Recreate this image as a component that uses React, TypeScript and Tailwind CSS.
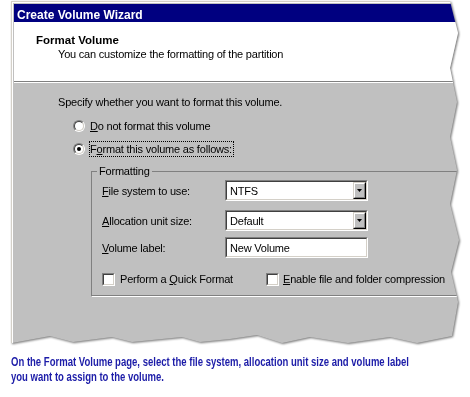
import type { ReactNode } from 'react'

function Sunken({ className, children }: { className: string; children?: ReactNode }) {
  return (
    <div className={`border border-t-[#808080] border-l-[#808080] border-b-white border-r-white ${className}`}>
      <div className="flex h-full border border-t-[#404040] border-l-[#404040] border-b-[#d4d0c8] border-r-[#d4d0c8] bg-white">
        {children}
      </div>
    </div>
  )
}

function Radio({ checked }: { checked?: boolean }) {
  return (
    <span className="flex size-[12px] shrink-0 rounded-full border border-t-[#808080] border-l-[#808080] border-b-white border-r-white">
      <span className="flex flex-1 items-center justify-center rounded-full border border-t-[#404040] border-l-[#404040] border-b-[#d4d0c8] border-r-[#d4d0c8] bg-white">
        {checked && <span className="size-[4px] rounded-full bg-black" />}
      </span>
    </span>
  )
}

function Check() {
  return <Sunken className="size-[13px] shrink-0" />
}

function Combo({ value }: { value: string }) {
  return (
    <Sunken className="h-[21px] w-[143px]">
      <span className="flex flex-1 items-center pl-[3px]">{value}</span>
      <span className="flex w-[13px] border border-t-[#d4d0c8] border-l-[#d4d0c8] border-b-black border-r-black">
        <span className="flex flex-1 items-center justify-center border border-t-white border-l-white border-b-[#808080] border-r-[#808080] bg-[#c0c0c0]">
          <svg width="5" height="3" viewBox="0 0 5 3">
            <path d="M0 0h5L2.5 3z" fill="#000" />
          </svg>
        </span>
      </span>
    </Sunken>
  )
}

export default function App() {
  return (
    <div className="h-[397px] w-[470px] overflow-hidden bg-white pl-[11px] pt-px font-['Liberation_Sans',Arial,sans-serif] text-black">
      <div className="w-[449px] [filter:drop-shadow(1px_1px_1px_rgba(0,0,0,0.55))]">
        <div className="h-[344px] w-[449px] overflow-hidden border-l border-t border-[#d4d0c8] bg-[#c0c0c0] [clip-path:polygon(0_0,439px_0,447px_32px,439px_67px,446px_101px,439px_136px,446px_169px,439px_203px,448px_239px,440px_271px,447px_301px,441px_335px,436px_336px,406px_342px,379px_336px,337px_342px,299px_336px,271px_342px,246px_334px,219px_338px,189px_341px,171px_336px,121px_341px,101px_336px,62px_341px,39px_335px,1px_342px,0_342px)]">
          <div className="flex h-full flex-col border-l border-t border-white pl-px pt-px">
            <div className="h-[18px] shrink-0 bg-[#000080] pl-[3px] pt-[4px] text-[12px] leading-[14px] font-bold text-white">
              Create Volume Wizard
            </div>

            <div className="h-[60px] shrink-0 border-b border-[#808080] bg-white pt-[11px] leading-[14px]">
              <div className="pl-[22px] text-[11.5px] font-bold">Format Volume</div>
              <div className="pl-[44px] text-[11px] tracking-[-0.2px]">
                You can customize the formatting of the partition
              </div>
            </div>

            <div className="flex flex-1 flex-col border-t border-white pt-[12px] text-[11px] leading-[14px] tracking-[-0.2px]">
              <div className="pl-[44px]">Specify whether you want to format this volume.</div>

              <div className="mt-[9px] flex h-[16px] items-center pl-[59px]">
                <Radio />
                <span className="ml-[5px]">
                  <u className="underline-offset-1">D</u>o not format this volume
                </span>
              </div>
              <div className="mt-[7px] flex h-[16px] items-center pl-[59px]">
                <Radio checked />
                <span className="ml-[4px] border border-dotted border-black pr-px">
                  F<u className="underline-offset-1">o</u>rmat this volume as follows:
                </span>
              </div>

              <fieldset className="ml-[77px] mt-[7px] w-[380px] shrink-0 border border-[#808080] pb-[10px] pl-[10px] shadow-[1px_1px_0_#fff]">
                <legend className="ml-[-5px] px-[2px] leading-[14px]">Formatting</legend>
                <div className="mt-[2px] grid grid-cols-[123px_143px] items-center">
                  <span>
                    <u className="underline-offset-1">F</u>ile system to use:
                  </span>
                  <Combo value="NTFS" />
                </div>
                <div className="mt-[9px] grid grid-cols-[123px_143px] items-center">
                  <span>
                    <u className="underline-offset-1">A</u>llocation unit size:
                  </span>
                  <Combo value="Default" />
                </div>
                <div className="mt-[6px] grid grid-cols-[123px_143px] items-center">
                  <span>
                    <u className="underline-offset-1">V</u>olume label:
                  </span>
                  <Sunken className="h-[21px] w-[143px]">
                    <span className="flex items-center pl-[3px]">New Volume</span>
                  </Sunken>
                </div>
                <div className="mt-[14px] grid h-[13px] grid-cols-[164px_auto] items-center">
                  <div className="flex items-center gap-[5px]">
                    <Check />
                    <span>
                      Perform a <u className="underline-offset-1">Q</u>uick Format
                    </span>
                  </div>
                  <div className="flex items-center gap-[4px]">
                    <Check />
                    <span>
                      <u className="underline-offset-1">E</u>nable file and folder compression
                    </span>
                  </div>
                </div>
              </fieldset>
            </div>
          </div>
        </div>
      </div>

      <p className="mt-[9px] w-[560px] origin-left scale-x-[0.733] whitespace-nowrap text-[13px] leading-[15px] font-bold text-[#1c1ca8]">
        On the Format Volume page, select the file system, allocation unit size and volume label
        <br />
        you want to assign to the volume.
      </p>
    </div>
  )
}
